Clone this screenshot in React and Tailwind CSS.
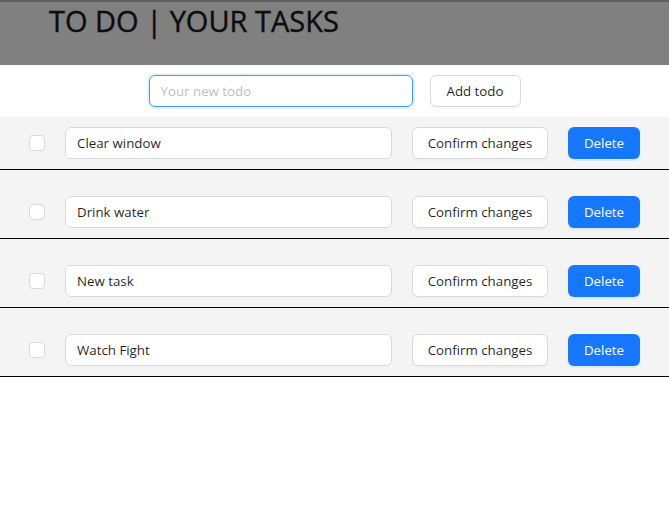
import { useState } from 'react';

const initialTodos = [
  { id: 1, title: 'Clear window', done: false },
  { id: 2, title: 'Drink water', done: false },
  { id: 3, title: 'New task', done: false },
  { id: 4, title: 'Watch Fight', done: false },
];

export default function App() {
  const [todos, setTodos] = useState(initialTodos);
  const [newTodo, setNewTodo] = useState('');

  const addTodo = () => {
    if (!newTodo.trim()) return;
    setTodos([...todos, { id: Date.now(), title: newTodo, done: false }]);
    setNewTodo('');
  };

  return (
    <div className="min-h-[508px] bg-white font-['Open_Sans',sans-serif] text-[13.3px] text-[rgba(0,0,0,0.88)]">
      <header className="h-[65px] bg-[#808080] border-t-2 border-[#5e5e5e] pl-[49px]">
        <h1 className="text-[29px] leading-[38px] text-[#0d0d0d] [-webkit-text-stroke:0.4px_#0d0d0d]">TO DO | YOUR TASKS</h1>
      </header>

      <div className="flex justify-center items-center gap-[17px] py-[10px]">
        <input
          className="w-[264px] h-[32px] px-[11px] rounded-[6px] border border-[#4096ff] shadow-[0_0_0_2px_rgba(5,145,255,0.1)] outline-none placeholder:text-[#bfbfbf]"
          placeholder="Your new todo"
          value={newTodo}
          onChange={e => setNewTodo(e.target.value)}
        />
        <button
          className="w-[91px] h-[32px] pt-px rounded-[6px] border border-[#d9d9d9] bg-white shadow-[0_2px_0_rgba(0,0,0,0.02)]"
          onClick={addTodo}
        >
          Add todo
        </button>
      </div>

      <div className="bg-[#f4f4f4]">
        {todos.map((todo, i) => (
          <div
            key={todo.id}
            className={`flex items-center justify-between px-[29px] py-[10px] border-b border-black ${i > 0 ? 'mt-4' : ''}`}
          >
            <span className="w-[16px] h-[16px] rounded-[4px] border border-[#d9d9d9] bg-white" />
            <input
              className="w-[327px] h-[32px] px-[11px] rounded-[6px] border border-[#d9d9d9] bg-white outline-none"
              defaultValue={todo.title}
            />
            <button className="w-[136px] h-[32px] pt-px rounded-[6px] border border-[#d9d9d9] bg-white shadow-[0_2px_0_rgba(0,0,0,0.02)]">
              Confirm changes
            </button>
            <button className="w-[72px] h-[32px] pt-px rounded-[6px] bg-[#1677ff] text-white shadow-[0_2px_0_rgba(5,145,255,0.1)]">
              Delete
            </button>
          </div>
        ))}
      </div>
    </div>
  );
}
